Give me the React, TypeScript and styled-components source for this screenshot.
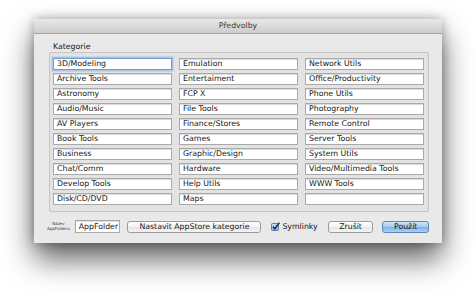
import React from "react";
import styled, { createGlobalStyle } from "styled-components";

const GlobalStyle = createGlobalStyle`
    html, body {
        margin: 0;
        padding: 0;
        background: #ffffff;
    }
    body {
        width: 475px;
        height: 292px;
        overflow: hidden;
        font-family: "DejaVu Sans", "Liberation Sans", sans-serif;
        color: #161616;
    }
`

const Stage = styled.div`
    padding: 19px 0 0 34px;
`

const Window = styled.div`
    width: 408px;
    height: 224px;
    background: #e9e9e9;
    display: flex;
    flex-direction: column;
    box-shadow: 0 16px 28px rgba(0,0,0,0.62), 0 0 10px rgba(0,0,0,0.3);
`

const TitleBar = styled.div`
    height: 14px;
    border-bottom: 1px solid #a4a4a4;
    background: linear-gradient(#e8e8e8, #cdcdcd);
    font-size: 7.8px;
    line-height: 14px;
    text-align: center;
    color: #3a3a3a;
`

const Content = styled.div`
    padding: 0 13px 0 11px;
    display: flex;
    flex-direction: column;
`

const GroupLabel = styled.div`
    height: 10px;
    margin: 8px 0 0 8px;
    font-size: 7.8px;
    line-height: 10px;
`

const GroupBox = styled.div`
    margin-left: 4px;
    padding: 5px 5px 6px 3px;
    border: 1px solid #c6c6c6;
    border-radius: 2px;
    background: #e3e3e3;
    display: grid;
    grid-template-columns: repeat(3, 119px);
    grid-template-rows: repeat(10, 12px);
    grid-auto-flow: column;
    column-gap: 7px;
    row-gap: 3px;
`

const Field = styled.div<{ $focused?: boolean }>`
    box-sizing: border-box;
    height: 12px;
    padding: 0 3px;
    background: #ffffff;
    border: 1px solid ${({ $focused }) => ($focused ? "#6f9bd0" : "#a9a9a9")};
    box-shadow: ${({ $focused }) =>
        $focused ? "0 0 0 1.5px #a9c5e8" : "inset 0 1px 0 #dcdcdc"};
    font-size: 7.8px;
    line-height: 10px;
    white-space: nowrap;
    overflow: hidden;
`

const BottomBar = styled.div`
    height: 13px;
    margin-top: 8px;
    display: flex;
    align-items: center;
`

const TinyLabel = styled.div`
    width: 27px;
    font-size: 4px;
    line-height: 4.5px;
    text-align: center;
    color: #333;
`

const NameField = styled(Field)`
    width: 46px;
    height: 13px;
    margin-left: 3px;
    line-height: 11px;
`

const PushButton = styled.div<{ $w: number; $gap: number; $primary?: boolean }>`
    box-sizing: border-box;
    width: ${({ $w }) => $w}px;
    height: 12px;
    margin-left: ${({ $gap }) => $gap}px;
    border: 1px solid ${({ $primary }) => ($primary ? "#5f86b8" : "#9c9c9c")};
    border-radius: 3px;
    background: ${({ $primary }) =>
        $primary
            ? "linear-gradient(#d2e5f8 0%, #a3c8f0 50%, #7fb2ea 51%, #a9d0f6 100%)"
            : "linear-gradient(#ffffff 0%, #f3f3f3 50%, #e6e6e6 51%, #f4f4f4 100%)"};
    font-size: 7.8px;
    line-height: 10px;
    text-align: center;
    color: #1a1a1a;
`

const CheckRow = styled.label`
    margin-left: 10px;
    display: flex;
    align-items: center;
    gap: 2px;
    font-size: 7.8px;
    line-height: 10px;
`

const CheckIcon = () => (
    <svg width="9" height="9" viewBox="0 0 9 9">
        <defs>
            <linearGradient id="cb" x1="0" y1="0" x2="0" y2="1">
                <stop offset="0" stopColor="#cfe2f6" />
                <stop offset="1" stopColor="#7eaee4" />
            </linearGradient>
        </defs>
        <rect x="0.5" y="1.5" width="7" height="7" rx="1" fill="url(#cb)" stroke="#5b7fae" />
        <path d="M2 4.6 L3.8 6.8 L8.4 0.6" fill="none" stroke="#1b2c48" strokeWidth="1.5" />
    </svg>
)

const columns = [
    "3D/Modeling", "Archive Tools", "Astronomy", "Audio/Music", "AV Players",
    "Book Tools", "Business", "Chat/Comm", "Develop Tools", "Disk/CD/DVD",
    "Emulation", "Entertaiment", "FCP X", "File Tools", "Finance/Stores",
    "Games", "Graphic/Design", "Hardware", "Help Utils", "Maps",
    "Network Utils", "Office/Productivity", "Phone Utils", "Photography", "Remote Control",
    "Server Tools", "System Utils", "Video/Multimedia Tools", "WWW Tools", "",
];

const App: React.FC = () => {
    return (
        <>
            <GlobalStyle />
            <Stage>
                <Window>
                    <TitleBar>Předvolby</TitleBar>
                    <Content>
                        <GroupLabel>Kategorie</GroupLabel>
                        <GroupBox>
                            {columns.map((c, i) => (
                                <Field key={i} $focused={i === 0}>{c}</Field>
                            ))}
                        </GroupBox>
                        <BottomBar>
                            <TinyLabel>Název<br />AppFolderu</TinyLabel>
                            <NameField>AppFolder</NameField>
                            <PushButton $w={135} $gap={7}>Nastavit AppStore kategorie</PushButton>
                            <CheckRow>
                                <CheckIcon />
                                Symlinky
                            </CheckRow>
                            <PushButton $w={46} $gap={10}>Zrušit</PushButton>
                            <PushButton $w={47} $gap={9} $primary>Použít</PushButton>
                        </BottomBar>
                    </Content>
                </Window>
            </Stage>
        </>
    )
}

export default App;
